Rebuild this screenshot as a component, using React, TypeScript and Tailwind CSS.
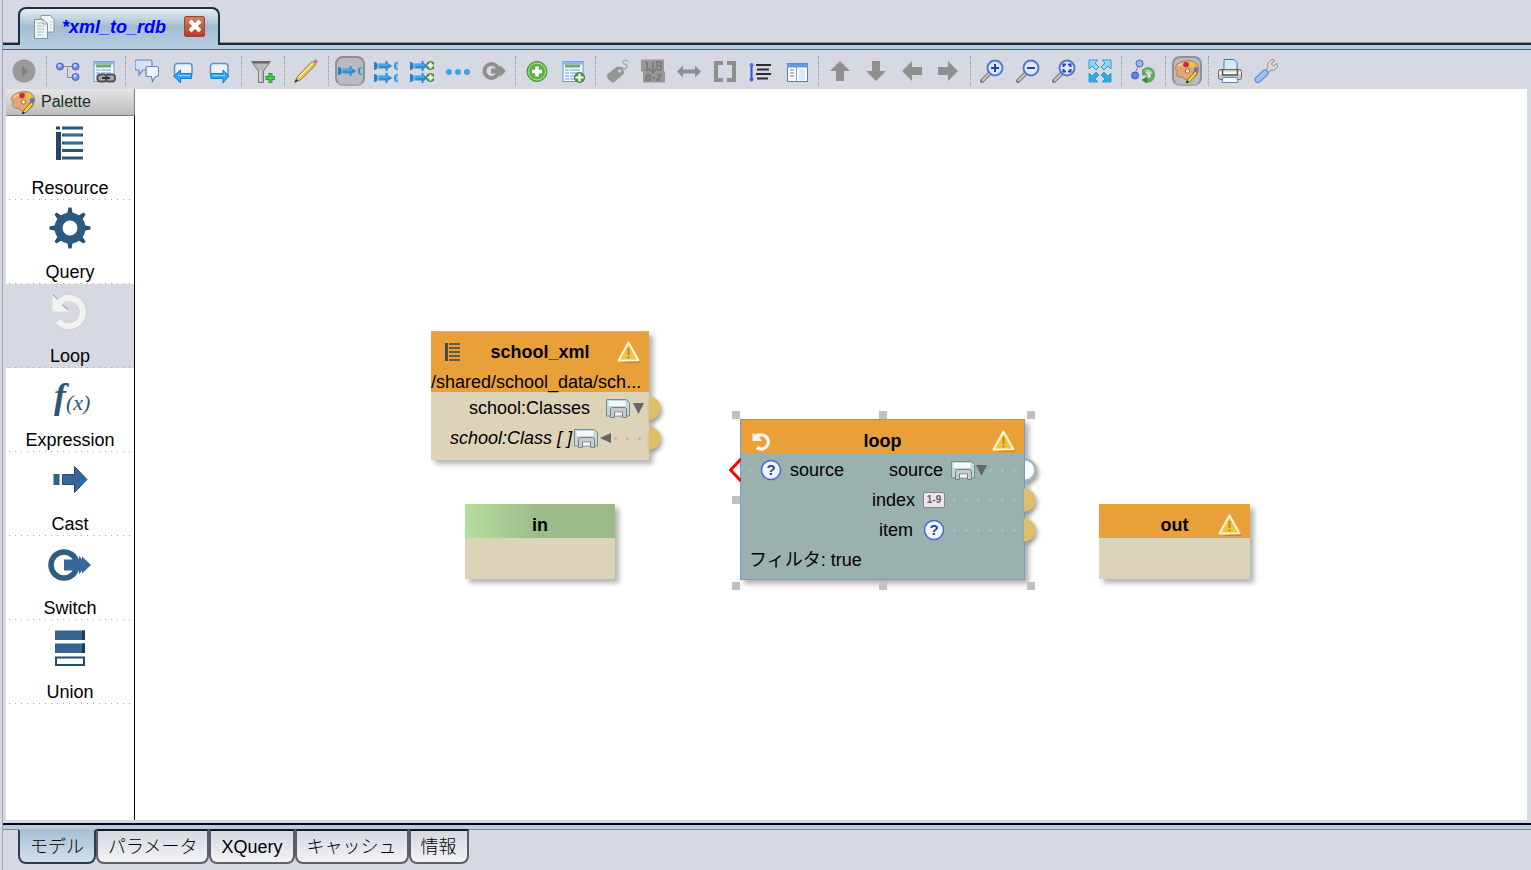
import React from 'react'

type IconProps = { children: React.ReactNode }

function Icon({ children }: IconProps) {
    return (
        <svg className="w-6 h-6 shrink-0" viewBox="0 0 24 24" fill="none">{children}</svg>
    )
}

function PlusBadge({ x, y, r }: { x: number; y: number; r: number }) {
    return (
        <g>
            <circle cx={x} cy={y} r={r} fill="#5a9c3c" stroke="#3f7c2c" />
            <path d={`M${x - r + 1} ${y}h${2 * r - 2}M${x} ${y - r + 1}v${2 * r - 2}`} stroke="#fff" strokeWidth="2" />
        </g>
    )
}

function CastRow({ y, end = true }: { y: number; end?: boolean }) {
    return (
        <g transform={`translate(0 ${y})`}>
            <path d="M0 -4h1l2.500 1.500v5L1 4H0z" fill="#1f7fc8" />
            <path d="M4.500 -2.500h7v-2.500h2v2l5 3-5 3v2h-2v-2.500h-7z" fill="#2b8fdc" />
            <path d="M5 -1h9" stroke="#6cbcf0" />
            {end && <path d="M24 -4c-3 0-4 1.500-4 4s1 4 4 4z" fill="#2b8fd8" />}
            {end && <path d="M23 -2.500v5" stroke="#b9dcf4" strokeWidth="1.500" />}
        </g>
    )
}

function Tree() {
    return (
        <Icon>
            <path d="M4 7.500h15M11.500 8v10.500h7" stroke="#8a8f98" />
            {[[4, 7.5], [19.5, 7.5], [19.5, 18]].map(([x, y]) => (
                <g key={`${x}-${y}`}>
                    <circle cx={x} cy={y} r="3.500" fill="#6f8ff0" stroke="#4a63c8" />
                    <circle cx={x - 0.5} cy={y - 1} r="1.500" fill="#c9d6ff" />
                </g>
            ))}
        </Icon>
    )
}

function TableDoc() {
    return (
        <g>
            <rect x="2" y="2.500" width="20" height="20" fill="#f3f8ff" stroke="#6b9ad6" />
            <path d="M2 4h20" stroke="#8db6ea" strokeWidth="3" />
            <path d="M4 7h15" stroke="#6cae5c" strokeWidth="3" />
            <path d="M4 11h15M4 14h15M4 17h15M4 20h11" stroke="#9dbbe4" strokeWidth="1.500" />
            <path d="M8.500 10v11" stroke="#f3f8ff" />
        </g>
    )
}

function TableLink() {
    return (
        <Icon>
            <TableDoc />
            <rect x="5" y="14.500" width="18" height="9" rx="4" fill="#aaa" />
            <rect x="5.500" y="15.500" width="9" height="7" rx="3" stroke="#555" strokeWidth="2" />
            <rect x="14" y="15.500" width="9" height="7" rx="3" stroke="#555" strokeWidth="2" />
            <path d="M10 19h8" stroke="#333" strokeWidth="2" />
        </Icon>
    )
}

function Bubbles() {
    return (
        <Icon>
            <path d="M2 1h13q2 0 2 2v6q0 2-2 2H8l-4 5v-5H2q-2 0-2-2V3q0-2 2-2z" fill="#d3e2f5" stroke="#5f88c0" strokeWidth="1.200" />
            <path d="M13 7.500h9q1.500 0 1.500 2v6q0 2-1.500 2h-1.500l-3 5-1-5H13q-2 0-2-2v-6q0-2 2-2z" fill="#edf4fd" stroke="#5f88c0" strokeWidth="1.200" />
        </Icon>
    )
}

function BubbleArrow({ right }: { right?: boolean }) {
    return (
        <Icon>
            <rect x="3.500" y="4.500" width="17.500" height="13" rx="3" fill="#e9f2fd" stroke="#5f8fd0" strokeWidth="1.500" />
            <path
                d={right ? 'M22 17l-6-6v3.500H4v5h12V24z' : 'M2.500 17l7-6v3.500h11v5h-11V24z'}
                fill="#3aa3ea" stroke="#1f7cc6"
            />
            <path d={right ? 'M5 16.500h13' : 'M7 16.500h12'} stroke="#8fd0fa" />
        </Icon>
    )
}

function Funnel() {
    return (
        <Icon>
            <path d="M0.500 2.500h19L12.500 12v11.500h-5V12z" fill="#b9b9b9" stroke="#777" />
            <path d="M2 3.500h16" stroke="#666" strokeWidth="2" />
            <path d="M9 11v12" stroke="#eee" />
            <path d="M19.500 14v10M14.500 19h10" stroke="#1f9e2c" strokeWidth="4" />
            <path d="M19.500 15v8M15.500 19h8" stroke="#3fd04c" strokeWidth="2" />
        </Icon>
    )
}

function Pencil() {
    return (
        <Icon>
            <path d="M1.500 22.500l2-5L18 2.500l3.500 3.500L6.500 21z" fill="#e8c84a" stroke="#8b7330" />
            <path d="M4.500 18.500L19 4" stroke="#fbf0a0" strokeWidth="1.500" />
            <path d="M19 2.500l2-2q2.500 0 2.500 2.500l-2 2z" fill="#e0605c" stroke="#b8b8c0" />
            <path d="M0 24l2-4 2 2z" fill="#333" />
        </Icon>
    )
}

function Switch({ fill }: { fill: string }) {
    return (
        <g>
            <circle cx="9.500" cy="12" r="7" stroke={fill} strokeWidth="4" />
            <path d="M9 9.500h7V7l2 1V6l6 6-6 6v-2l-2 1v-2.500H9z" fill={fill} />
        </g>
    )
}

function Lens({ children }: IconProps) {
    return (
        <Icon>
            <path d="M2 22l8-8" stroke="#777" strokeWidth="4" strokeLinecap="round" />
            <path d="M2 22l8-8" stroke="#c8c8c8" strokeWidth="2" />
            <circle cx="15" cy="9" r="7.500" fill="#dce8fd" stroke="#5577d8" strokeWidth="2" />
            <g stroke="#2244b0" strokeWidth="2">{children}</g>
        </Icon>
    )
}

function Arrow({ turn }: { turn: number }) {
    return (
        <Icon>
            <path
                d="M12 2l10 10h-6v10H8V12H2z" fill="#8f8f8f"
                transform={`rotate(${turn} 12 12)`}
            />
        </Icon>
    )
}

function PaletteIcon() {
    return (
        <Icon>
            <path d="M8 2.500C14 0 23 2 23.500 9c0 6-3 9-8 11-4 1.500-6 1-6.500-1-.5-2-3 0-6-1.500-2-1-2-4 0-5.500-3-.5-3-3-2-5 1-2.500 4-3.500 7-4.500z" fill="#e2a874" stroke="#b87a48" />
            <path d="M3 7c3-3 6-2 9-4" stroke="#f3cba0" strokeWidth="2" />
            <circle cx="11" cy="5.500" r="2.800" fill="#d8262c" />
            <circle cx="17.500" cy="5.500" r="2.800" fill="#e8c830" />
            <circle cx="21" cy="10.500" r="2.200" fill="#4a7ad0" />
            <circle cx="20" cy="14.500" r="2.200" fill="#c83040" />
            <circle cx="12.500" cy="12" r="2.200" fill="#f6e6d4" stroke="#a8683a" />
            <path d="M13 22.500l8-9" stroke="#8a7418" strokeWidth="3.500" />
            <path d="M13.500 22l7.500-8.500" stroke="#f4dc4c" strokeWidth="2" />
            <path d="M11.500 24l1.500-2" stroke="#222" strokeWidth="2" />
        </Icon>
    )
}

function Printer() {
    return (
        <Icon>
            <path d="M6 12V0.500h10l3 3V12z" fill="#d3e9fb" stroke="#3f78b8" />
            <rect x="0.500" y="10.500" width="23" height="10" rx="2" fill="#c9c9c9" stroke="#666" />
            <path d="M1 14h22" stroke="#f4f4f4" strokeWidth="3" />
            <path d="M4.500 10v6h15v-6" stroke="#555" strokeWidth="1.500" />
            <path d="M5 18.500h14l1 5H4z" fill="#f5fafe" stroke="#5d86b0" />
        </Icon>
    )
}

function Wrench() {
    return (
        <Icon>
            <path d="M9 13l5-4.500c-1-4 1-7 5-8l1.500 1-3 3.500 2 2 3.500-2.500 1 1.500c-1 4-4 6-7 5L12 16z" fill="#dadada" stroke="#8a8a8a" />
            <path d="M4 20.500l7-6.500" stroke="#5484cc" strokeWidth="7" strokeLinecap="round" />
            <path d="M4 20.500l7-6.500" stroke="#9cc2f4" strokeWidth="5" strokeLinecap="round" />
        </Icon>
    )
}

const expandArrow = 'M1 1h9l-3 3 4 4-3 3-4-4-3 3z'

type Tool = { name: string; icon: React.ReactNode; pressed?: boolean }

const toolGroups: Tool[][] = [
    [
        { name: 'Run', icon: <Icon><circle cx="12" cy="12" r="11.500" fill="#9a9a9a" /><path d="M10 6.500l6 5.500-6 5.500z" fill="#7f7f7f" /></Icon> },
    ],
    [
        { name: 'Tree', icon: <Tree /> },
        { name: 'Linked table', icon: <TableLink /> },
    ],
    [
        { name: 'Comments', icon: <Bubbles /> },
        { name: 'Previous comment', icon: <BubbleArrow /> },
        { name: 'Next comment', icon: <BubbleArrow right /> },
    ],
    [{ name: 'Add filter', icon: <Funnel /> }],
    [{ name: 'Edit', icon: <Pencil /> }],
    [
        { name: 'Single cast', icon: <Icon><CastRow y={12} /></Icon>, pressed: true },
        { name: 'Double cast', icon: <Icon><CastRow y={7} /><CastRow y={19} /></Icon> },
        {
            name: 'Add casts',
            icon: <Icon><CastRow y={7} end={false} /><CastRow y={19} end={false} /><PlusBadge x={20.5} y={6.5} r={4} /><PlusBadge x={20.5} y={18.5} r={4} /></Icon>,
        },
        { name: 'More', icon: <Icon><g fill="#3ba3ec"><circle cx="3" cy="13" r="3" /><circle cx="12" cy="13" r="3" /><circle cx="21" cy="13" r="3" /></g></Icon> },
        { name: 'Switch', icon: <Icon><Switch fill="#8f8f8f" /></Icon> },
    ],
    [
        { name: 'Add', icon: <Icon><circle cx="12" cy="12.500" r="10" fill="#5cb044" stroke="#458f35" /><circle cx="12" cy="12.500" r="8.500" stroke="#b4e0a0" /><path d="M12 7.500v10M7 12.500h10" stroke="#fff" strokeWidth="3.500" /></Icon> },
        { name: 'Add table', icon: <Icon><TableDoc /><PlusBadge x={18.5} y={18.5} r={5} /></Icon> },
    ],
    [
        { name: 'Tag', icon: <Icon><path d="M1.500 16L12 7.500l6 1 1 6L9.500 23q-2 1-3 0L3 20z" fill="#969696" /><circle cx="14.500" cy="12" r="1.500" fill="#ddd" /><path d="M15 11c4 0 6-1 7-3.500S18 6 18 3.500s3-3 5-1" stroke="#aaa" strokeWidth="1.500" /></Icon> },
        {
            name: 'Sort',
            icon: (
                <Icon>
                    <path d="M0 0.500h23v12h1v11H2v-11H0z" fill="#989898" />
                    <g stroke="#777" strokeWidth="1.500">
                        <path d="M6 3v8M5 5l1-2M4 11h4M12 3v9M8 9l4 5 4-5M20 3v8h-4M20 7h-4V3h4M5 16h4v5H5v-3h4M16 16h4l-4 5h4M11 19h3" />
                    </g>
                </Icon>
            ),
        },
        { name: 'Stretch', icon: <Icon><path d="M0 12.500l6-6v4h12v-4l6 6-6 6v-4H6v4z" fill="#8f8f8f" /></Icon> },
        { name: 'Brackets', icon: <Icon><path d="M10 4H3v17h7M14 4h7v17h-7" stroke="#8f8f8f" strokeWidth="4" /></Icon> },
        {
            name: 'List',
            icon: (
                <Icon>
                    <path d="M2.500 5v16" stroke="#2f50c8" strokeWidth="2" />
                    <circle cx="2.500" cy="6" r="2" fill="#4e70ec" /><circle cx="2.500" cy="20.500" r="2" fill="#3e63e8" />
                    <path d="M7 6h15M8 10.500h12M7 15h15M8 19.500h11" stroke="#2c2c34" strokeWidth="1.800" />
                </Icon>
            ),
        },
        {
            name: 'Side panel',
            icon: (
                <Icon>
                    <rect x="2.500" y="4.500" width="20" height="18" fill="#fff" stroke="#4f7fc4" />
                    <path d="M2 6.500h21" stroke="#5f9ae0" strokeWidth="4" />
                    <path d="M11.500 8v14" stroke="#7ba3dc" />
                    <path d="M5 11h4M5 14h4M5 17h4" stroke="#6a7c98" />
                    <path d="M14 10h6v11h-6z" fill="#dfe9f8" />
                </Icon>
            ),
        },
    ],
    [
        { name: 'Up', icon: <Arrow turn={0} /> },
        { name: 'Down', icon: <Arrow turn={180} /> },
        { name: 'Left', icon: <Arrow turn={270} /> },
        { name: 'Right', icon: <Arrow turn={90} /> },
    ],
    [
        { name: 'Zoom in', icon: <Lens><path d="M15 5v8M11 9h8" /></Lens> },
        { name: 'Zoom out', icon: <Lens><path d="M11 9h8" /></Lens> },
        { name: 'Zoom to fit', icon: <Lens><path d="M11.500 8V5.500H14M16 5.500h2.500V8M18.500 10v2.500H16M14 12.500h-2.500V10" /></Lens> },
        {
            name: 'Full screen',
            icon: (
                <Icon>
                    <g stroke="#3a98cc">
                        <path d={expandArrow} fill="#8fd4f6" />
                        <path d={expandArrow} fill="#8fd4f6" transform="translate(24 0) scale(-1 1)" />
                        <path d={expandArrow} fill="#2fa8e4" transform="translate(0 24) scale(1 -1)" />
                        <path d={expandArrow} fill="#2fa8e4" transform="translate(24 24) scale(-1 -1)" />
                    </g>
                </Icon>
            ),
        },
    ],
    [
        {
            name: 'Refresh model',
            icon: (
                <Icon>
                    <path d="M8 5L3.500 16" stroke="#888" />
                    <circle cx="8.500" cy="4.500" r="3.500" fill="#9fb4f4" stroke="#4a63c8" />
                    <circle cx="4" cy="16.500" r="3.500" fill="#5f80e8" stroke="#3c55c0" />
                    <path d="M13 12c4-4 9-1 9 4 0 4-3 6-7 5.500" stroke="#5fa858" strokeWidth="4" />
                    <path d="M10.500 21l6-4v8z" fill="#3f8c3c" />
                    <path d="M14 12c3-2 6.500 0 7 3" stroke="#b6dcb0" strokeWidth="1.500" />
                    <path d="M11 9.500v7h6z" fill="#5fa858" />
                </Icon>
            ),
        },
    ],
    [{ name: 'Palette', icon: <PaletteIcon />, pressed: true }],
    [
        { name: 'Print', icon: <Printer /> },
        { name: 'Settings', icon: <Wrench /> },
    ],
]

const gearTeeth = [0, 45, 90, 135, 180, 225, 270, 315]

const paletteItems = [
    {
        name: 'Resource',
        art: (
            <>
                <path d="M10 6.500h4v3h-4zM10 12h5v28h-5z" fill="#24485f" />
                <path d="M16 8h21M16 15h21M16 23h21M16 30.500h21M16 38h21" stroke="#2c5676" strokeWidth="3" />
                <path d="M18 23h17M18 15h17" stroke="#5585b0" />
            </>
        ),
    },
    {
        name: 'Query',
        art: (
            <>
                {gearTeeth.map((a) => (
                    <path key={a} d="M22.500 3.500h3l1 5 2.500 4h-10l2.500-4z" fill="#284f6c" transform={`rotate(${a} 24 24)`} />
                ))}
                <circle cx="24" cy="24" r="11.500" stroke="#2d5a80" strokeWidth="8" />
            </>
        ),
    },
    {
        name: 'Loop',
        art: (
            <>
                <path d="M18 11a14 14 0 1 1-6 22" stroke="#c4c4c6" strokeWidth="7.500" />
                <path d="M18 11a14 14 0 1 1-6 22" stroke="#f2f2f2" strokeWidth="6.500" />
                <path d="M6.500 6.500l5 5 7-4 0 7-3 2 7 7H6.500z" fill="#f4f4f4" />
                <path d="M7 7l5 4.500M16 16.500l6 5" stroke="#8d8d8d" />
            </>
        ),
    },
    {
        name: 'Expression',
        art: (
            <g fill="#2c5676" fontFamily="Liberation Serif, serif" fontStyle="italic">
                <text x="8" y="36" fontSize="36" fontWeight="bold">f</text>
                <text x="20" y="38" fontSize="22">(x)</text>
            </g>
        ),
    },
    {
        name: 'Cast',
        art: (
            <>
                <path d="M7.500 18h6v11h-6z" fill="#355f7e" />
                <path d="M16.500 18.500h12v-8L41 23.500l-12.500 13v-8h-12z" fill="#34679a" stroke="#284b66" />
            </>
        ),
    },
    {
        name: 'Switch',
        art: (
            <>
                <circle cx="18" cy="25" r="13" stroke="#2f5c84" strokeWidth="5.500" />
                <path d="M18 19.500h15v-4l3 4v-3l9 8.500-9 8.500v-3l-3 4v-4H18z" fill="#34679a" />
            </>
        ),
    },
    {
        name: 'Union',
        art: (
            <>
                <path d="M9 6.500h30v9.500H9zM9 19.500h30v9.500H9z" fill="#34648f" />
                <path d="M37.500 6.500v9.500M37.500 19.500v9.500" stroke="#1d3b52" strokeWidth="3" />
                <rect x="10" y="33.500" width="28" height="7.500" fill="#fff" stroke="#2a4c66" strokeWidth="2" />
            </>
        ),
    },
]

const bottomTabs = ['モデル', 'パラメータ', 'XQuery', 'キャッシュ', '情報']

function Warning() {
    return (
        <Icon>
            <path d="M4 22.500h19l-1-3z" fill="#b8620c" />
            <path d="M11.500 2.500L1.500 20.500h20z" fill="#eec440" stroke="#fdf6d8" strokeWidth="2" strokeLinejoin="round" />
            <path d="M11.500 8v7M11.500 16.500v2" stroke="#b88a20" strokeWidth="2" />
        </Icon>
    )
}

function Unknown() {
    return (
        <svg className="w-[22px] h-[22px] shrink-0" viewBox="0 0 22 22">
            <circle cx="11" cy="11" r="9.500" fill="#f2f6ff" stroke="#4668d8" strokeWidth="1.500" />
            <text x="11" y="16" textAnchor="middle" fontSize="15" fontWeight="bold" fill="#2444a8" fontFamily="Liberation Sans, sans-serif">?</text>
        </svg>
    )
}

function Element() {
    return (
        <Icon>
            <path d="M0.500 3.500h20l3 3V20H0.500z" fill="#c3d8d6" stroke="#6f8f90" />
            <path d="M2.500 5h17v5h-17z" fill="#f4faf9" />
            <path d="M4.500 21.500V13.500q0-2 2-2h12q2 0 2 2v8h-4V16h-8v5.500z" fill="#c9c9d0" stroke="#7c7c86" />
            <path d="M9 16.500h7v3H9z" fill="#f4f4f6" />
        </Icon>
    )
}

function NumberType() {
    return (
        <span className="flex w-[22px] h-4 items-center justify-center rounded-xs border border-[#8b7f8b] bg-[#ece6ec] text-[10px] font-bold text-[#6a5a66]">1-9</span>
    )
}

function Triangle({ left }: { left?: boolean }) {
    return (
        <svg className="w-3 h-3 shrink-0" viewBox="0 0 12 12">
            <path d={left ? 'M0 6L11 1v10z' : 'M1 1h11L6.500 12z'} fill="#666" />
        </svg>
    )
}

function Dots({ count }: { count: number }) {
    return (
        <span className="flex gap-[9px]">
            {Array.from({ length: count }, (_, i) => (
                <span key={i} className="w-[3px] h-[3px] rounded-full bg-[#a4c0c0]"></span>
            ))}
        </span>
    )
}

function Port({ open }: { open?: boolean }) {
    return (
        <svg className="absolute left-full top-1/2 w-4 h-8 -translate-y-1/2 overflow-visible drop-shadow-[2px_3px_2px_rgba(0,0,0,0.35)]" viewBox="0 0 16 32">
            {open
                ? <path d="M1 5.500a10.500 10.500 0 0 1 0 21" fill="#fff" stroke="#9dbab9" strokeWidth="2.500" />
                : <path d="M0 4.500a11.500 11.500 0 0 1 0 23z" fill="#ddbf68" />}
        </svg>
    )
}

function Handle({ className }: { className: string }) {
    return <span className={`absolute w-2 h-2 bg-[#c0c0c0] ${className}`}></span>
}

const nodeShadow = 'shadow-[4px_4px_5px_rgba(0,0,0,0.3)]'

export default function App() {
    return (
        <div className="flex flex-col h-screen min-w-0 bg-[#d6d9e1] pl-0.5 font-['Liberation_Sans','Noto_Sans_CJK_JP',sans-serif] text-lg text-black">
            <div className="flex flex-1 flex-col min-h-0 border-l border-[#a0a4ac]">

                {/* Document tabs */}
                <div className="flex items-end pt-[7px]">
                    <div className="w-[15px] h-[3px] bg-[#1f2635] border-t border-[#8d929c]"></div>
                    <div className="flex w-[202px] h-[38px] items-center rounded-t-lg border-2 border-b-0 border-[#1d2d42] bg-linear-to-b from-[#e8edf3] via-[#a4bccf] to-[#b6cde0] pl-[13px]">
                        <Icon>
                            <path d="M8 0.500h9l4 4V17H8z" fill="#f2f8f6" stroke="#7f9797" />
                            <path d="M1.500 4.500h9l4 4v15h-13z" fill="#eaf4f1" stroke="#7f9797" />
                            <path d="M10 5v4h4" stroke="#8fa5a5" />
                            <path d="M4 8h5M4 11h7M4 14h7M4 17h7M4 20h5M17 7h2M17 10h2M17 13h2" stroke="#a9bfba" />
                        </Icon>
                        <button className="ml-[5px] font-bold italic text-[#0000ff]">*xml_to_rdb</button>
                        <button className="ml-[18px] mb-0.5 flex w-[21px] h-[21px] items-center justify-center rounded-xs border border-[#a04030] bg-linear-to-b from-[#d08070] to-[#b03c20]" aria-label="Close">
                            <svg className="w-3.5 h-3.5" viewBox="0 0 14 14"><path d="M2 2l10 10M12 2L2 12" stroke="#fff" strokeWidth="4" /></svg>
                        </button>
                    </div>
                    <div className="flex-1 h-[3px] bg-[#1f2635] border-t border-[#8d929c]"></div>
                </div>
                <div className="h-[5px] bg-[#b5cde1] border-b border-[#566478]"></div>

                {/* Toolbar */}
                <div className="flex h-[39px] shrink-0 items-center pl-[3px] pt-[3px]">
                    {toolGroups.map((group, i) => (
                        <React.Fragment key={i}>
                            {i > 0 && (
                                <div className={`flex shrink-0 justify-center ${i % 2 ? 'w-2' : 'w-[7px]'}`}>
                                    <div className="h-[30px] border-l border-dotted border-[#8f939c]"></div>
                                </div>
                            )}
                            {group.map((tool) => (
                                <button
                                    key={tool.name}
                                    aria-label={tool.name}
                                    className={`flex w-[30px] h-[30px] mx-[3px] shrink-0 items-center justify-center rounded-lg ${tool.pressed ? 'border-2 border-[#8e9096] border-b-[#a6a8ae] bg-[#b9bbc1]' : ''}`}
                                >
                                    {tool.icon}
                                </button>
                            ))}
                        </React.Fragment>
                    ))}
                </div>

                <div className="flex flex-1 min-h-0 pl-[3px] pr-1">
                    {/* Palette */}
                    <div className="flex flex-col w-[129px] shrink-0 bg-white">
                        <div className="flex h-[27px] shrink-0 items-center gap-1.5 border-b border-r border-[#7d7d7d] bg-linear-to-b from-[#e6e6e8] to-[#bcbcbe] pl-[5px] text-base text-[#16301a]">
                            <PaletteIcon />
                            Palette
                        </div>
                        <div className="flex-1 border-r border-black">
                            {paletteItems.map((item) => (
                                <button
                                    key={item.name}
                                    className={`flex w-full h-[84px] flex-col items-center pt-1 ${item.name === 'Loop' ? 'bg-[#d6d9e1]' : ''}`}
                                >
                                    <svg className="w-12 h-12 shrink-0" viewBox="0 0 48 48" fill="none">{item.art}</svg>
                                    <span className="mt-2 leading-6">{item.name}</span>
                                    <span className="mt-[-1px] w-[122px] h-px bg-[repeating-linear-gradient(90deg,#a8a8a8_0_1px,transparent_1px_6px)]"></span>
                                </button>
                            ))}
                        </div>
                    </div>

                    {/* Model canvas */}
                    <div className="relative flex-1 overflow-hidden bg-white">
                        <div className={`absolute left-[296px] top-[242px] w-[218px] bg-[#ddd3b8] pb-[7px] ${nodeShadow}`}>
                            <div className="h-[61px] border-t border-[#d9b25c] bg-[#eaa038]">
                                <div className="flex h-10 items-center px-2 font-bold">
                                    <svg className="w-6 h-6" viewBox="0 0 24 24" fill="none">
                                        <path d="M7.500 3v18" stroke="#4a4a4a" strokeWidth="3" />
                                        <path d="M10 4h11M10 8h11M10 12h11M10 16h11M10 20h11" stroke="#6a5a3c" strokeWidth="2" />
                                    </svg>
                                    <span className="flex-1 text-center">school_xml</span>
                                    <Warning />
                                </div>
                                <div className="h-5 leading-5 whitespace-nowrap">/shared/school_data/sch...</div>
                            </div>
                            <div className="relative mt-px flex h-[30px] items-center justify-end gap-0.5 pr-[5px]">
                                <span className="mr-3.5">school:Classes</span>
                                <Element />
                                <Triangle />
                                <Port />
                            </div>
                            <div className="relative flex h-[30px] items-center justify-end gap-0.5 pr-2">
                                <span className="italic">school:Class [ ]</span>
                                <Element />
                                <Triangle left />
                                <Dots count={3} />
                                <Port />
                            </div>
                        </div>

                        <div className={`absolute left-[330px] top-[415px] w-[150px] h-[75px] bg-[#ddd3b8] ${nodeShadow}`}>
                            <div className="h-[34px] bg-linear-to-r from-[#b6df9e] to-[#9cbb89] to-50% pt-[7px] text-center font-bold leading-7">in</div>
                        </div>

                        <div className="absolute left-[605px] top-[330px] w-[285px]">
                            <div className={`border border-[#6ca0d8] bg-[#9bb1b0] pb-1 ${nodeShadow}`}>
                                <div className="flex h-[34px] items-center bg-[#eaa038] px-2 pt-2 font-bold">
                                    <svg className="w-6 h-6" viewBox="0 0 24 24" fill="none">
                                        <path d="M9.500 6.500a7 7 0 1 1-1.500 12" stroke="#fbf6ea" strokeWidth="3.500" />
                                        <path d="M3.500 3.500l2.500 2 4-1.500v4l3 4h-9.500z" fill="#fbf6ea" />
                                    </svg>
                                    <span className="flex-1 text-center">loop</span>
                                    <Warning />
                                </div>
                                <div className="relative mt-px flex h-[30px] items-center pl-2">
                                    <Dots count={1} />
                                    <span className="ml-2"><Unknown /></span>
                                    <span className="ml-2">source</span>
                                    <span className="ml-auto mr-2">source</span>
                                    <Element />
                                    <Triangle />
                                    <span className="ml-0.5 mr-2"><Dots count={3} /></span>
                                    <Port open />
                                    <svg className="absolute right-full top-1/2 w-3 h-6 -translate-y-1/2" viewBox="0 0 12 24" fill="none">
                                        <path d="M12 1L1.500 12 12 23" stroke="#f00" strokeWidth="3" />
                                    </svg>
                                </div>
                                <div className="relative flex h-[30px] items-center justify-end gap-2 pr-2">
                                    <span>index</span>
                                    <NumberType />
                                    <Dots count={6} />
                                    <Port />
                                </div>
                                <div className="relative flex h-[30px] items-center justify-end gap-2 pr-2">
                                    <span className="mr-0.5">item</span>
                                    <Unknown />
                                    <Dots count={6} />
                                    <Port />
                                </div>
                                <div className="flex h-[30px] items-center pl-2">フィルタ: true</div>
                            </div>
                            <Handle className="-left-2 -top-2" />
                            <Handle className="left-1/2 -translate-x-1/2 -top-2" />
                            <Handle className="-right-2.5 -top-2" />
                            <Handle className="-left-2 top-1/2 -translate-y-1/2" />
                            <Handle className="-left-2 -bottom-2.5" />
                            <Handle className="left-1/2 -translate-x-1/2 -bottom-2.5" />
                            <Handle className="-right-2.5 -bottom-2.5" />
                        </div>

                        <div className={`absolute left-[964px] top-[415px] w-[151px] h-[75px] bg-[#ddd3b8] ${nodeShadow}`}>
                            <div className="flex h-[34px] items-center bg-[#eaa038] pl-8 pr-2 pt-[7px] font-bold">
                                <span className="flex-1 text-center">out</span>
                                <Warning />
                            </div>
                        </div>
                    </div>
                </div>

                {/* View tabs */}
                <div className="mt-[3px] h-0.5 shrink-0 bg-[#06061c]"></div>
                <div className="h-[5px] shrink-0 bg-[#b9cde2] border-b border-[#7d8898]"></div>
                <div className="flex h-10 shrink-0 pl-[15px]">
                    {bottomTabs.map((tab, i) => (
                        <button
                            key={tab}
                            className={`h-[35px] px-[10px] -mt-px rounded-b-lg border-2 font-light leading-7 pt-px ${i === 0 ? 'border-[#2b3f52] border-t-[#a9c0d4] bg-linear-to-b from-[#a9c0d4] to-[#d3e0ea]' : 'border-[#5b5e68] border-t-[#15182a] bg-linear-to-b from-[#d6d9e1] to-[#f2f3f6]'}`}
                        >
                            {tab}
                        </button>
                    ))}
                </div>
            </div>
        </div>
    )
}
